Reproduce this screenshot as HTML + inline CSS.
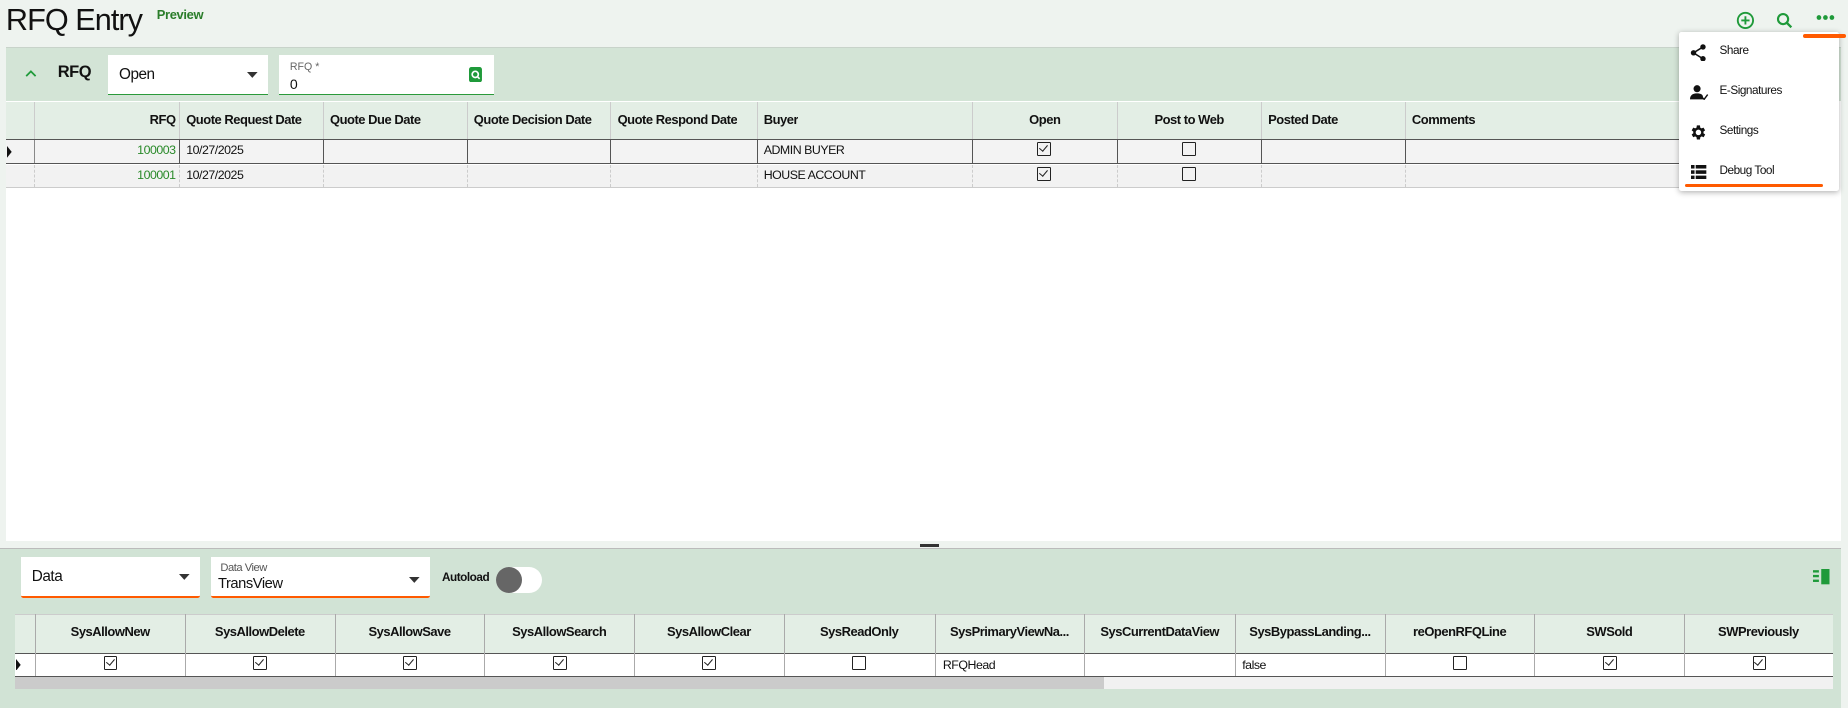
<!DOCTYPE html>
<html><head><meta charset="utf-8"><style>
html{zoom:1.17857}
body{margin:0;width:1568px;height:600px;background:#eef3ef;font-family:"Liberation Sans",sans-serif;position:relative;overflow:hidden;color:#111}
.a{position:absolute}
.f{font-family:"Liberation Sans",sans-serif;letter-spacing:-0.4px}
.h{font-size:11px;font-weight:bold;position:absolute;top:0;line-height:31px;white-space:nowrap;overflow:hidden}
.c{font-size:10.5px;position:absolute;white-space:nowrap}
.cb{position:absolute;width:10px;height:10px;border:1.6px solid #222;border-radius:1px}
.ck::after{content:"";position:absolute;left:2.5px;top:0px;width:3px;height:6px;border:solid #222;border-width:0 1.6px 1.6px 0;transform:rotate(40deg)}
.vl{position:absolute;top:0;bottom:0;border-left:1px solid #ccc}
.mi{position:absolute;left:34px;font-size:10px}
</style></head><body>
<div class="a" style="left:5px;top:2px;font-size:26px;line-height:32px;letter-spacing:-0.8px">RFQ Entry</div>
<div class="a" style="left:133px;top:6px;font-size:11px;font-weight:bold;color:#2a7d2a;letter-spacing:-0.3px">Preview</div>
<svg class="a" style="left:1473px;top:9px" width="16" height="16" viewBox="0 0 16 16"><circle cx="8" cy="8" r="6.5" fill="none" stroke="#1f9a3a" stroke-width="1.6"/><path d="M8 4.5v7M4.5 8h7" stroke="#1f9a3a" stroke-width="1.6"/></svg>
<svg class="a" style="left:1507px;top:10px" width="15" height="15" viewBox="0 0 15 15"><circle cx="6" cy="6" r="4.3" fill="none" stroke="#1f9a3a" stroke-width="1.8"/><path d="M9 9l4 4" stroke="#1f9a3a" stroke-width="2"/></svg>
<svg class="a" style="left:1541px;top:12px" width="16" height="6"><circle cx="2.5" cy="3" r="2" fill="#1f9a3a"/><circle cx="8" cy="3" r="2" fill="#1f9a3a"/><circle cx="13.5" cy="3" r="2" fill="#1f9a3a"/></svg>

<div class="a" style="left:5px;top:40px;width:1557px;height:418px;background:#fff;border-top:1px solid #c8d3ca">
 <div class="a" style="left:0;top:0;width:100%;height:45px;background:#d3e4d6"></div>
 <svg class="a" style="left:16px;top:18px" width="10" height="8"><path d="M1 6l4-4 4 4" fill="none" stroke="#1f9a3a" stroke-width="1.5"/></svg>
 <div class="a f" style="left:44px;top:13px;font-size:14px;font-weight:bold">RFQ</div>
 <div class="a" style="left:87px;top:6px;width:135px;height:33px;background:#fff;border-bottom:1.5px solid #2a9a3a"><span class="a f" style="left:9px;top:9px;font-size:13px">Open</span><svg class="a" style="left:118px;top:14px" width="9" height="5"><path d="M0 0h9L4.5 5z" fill="#333"/></svg></div>
 <div class="a" style="left:232px;top:6px;width:182px;height:33px;background:#fff;border-bottom:1.5px solid #2a9a3a"><span class="a" style="left:9px;top:5px;font-size:9px;color:#666">RFQ *</span><span class="a" style="left:9px;top:18px;font-size:12px">0</span><svg class="a" style="left:161px;top:10px" width="11" height="13"><rect x="0" y="0" width="11" height="13" rx="2" fill="#1f9a3a"/><circle cx="5.3" cy="6.3" r="2.6" fill="none" stroke="#fff" stroke-width="1.4"/><path d="M7 8l2 2" stroke="#fff" stroke-width="1.4"/></svg></div>
 <div class="a" style="left:0;top:46px;width:1425px;height:31px;background:#e3eee5;border-bottom:1px solid #bbb">
  <div class="vl" style="left:24px"></div><div class="vl" style="left:147px"></div><div class="vl" style="left:269px"></div><div class="vl" style="left:391px"></div><div class="vl" style="left:513px"></div><div class="vl" style="left:637px"></div><div class="vl" style="left:820px"></div><div class="vl" style="left:943px"></div><div class="vl" style="left:1065px"></div><div class="vl" style="left:1187px"></div>
  <div class="h f" style="left:24px;width:120px;text-align:right">RFQ</div>
  <div class="h f" style="left:153px">Quote Request Date</div><div class="h f" style="left:275px">Quote Due Date</div><div class="h f" style="left:397px">Quote Decision Date</div><div class="h f" style="left:519px">Quote Respond Date</div><div class="h f" style="left:643px">Buyer</div>
  <div class="h f" style="left:820px;width:123px;text-align:center">Open</div><div class="h f" style="left:943px;width:122px;text-align:center">Post to Web</div><div class="h f" style="left:1071px">Posted Date</div><div class="h f" style="left:1193px">Comments</div>
 </div>
 <div class="a" style="left:0;top:77px;width:1425px;height:20px;background:#f3f3f3;border-top:1.5px solid #555;border-bottom:1.5px solid #555">
  <svg class="a" style="left:1px;top:5px" width="5" height="10"><path d="M0 0l4 5-4 5z" fill="#111"/></svg>
  <div class="vl" style="left:24px;border-color:#888"></div><div class="vl" style="left:147px;border-color:#555"></div><div class="vl" style="left:269px;border-color:#555"></div><div class="vl" style="left:391px;border-color:#555"></div><div class="vl" style="left:513px;border-color:#555"></div><div class="vl" style="left:637px;border-color:#555"></div><div class="vl" style="left:820px;border-color:#555"></div><div class="vl" style="left:943px;border-color:#555"></div><div class="vl" style="left:1065px;border-color:#555"></div><div class="vl" style="left:1187px;border-color:#555"></div>
  <div class="c f" style="left:24px;width:120px;text-align:right;top:3px;color:#2a8a2a">100003</div><div class="c f" style="left:153px;top:3px">10/27/2025</div><div class="c f" style="left:643px;top:3px">ADMIN BUYER</div>
  <div class="cb ck" style="left:875px;top:2px"></div><div class="cb" style="left:998px;top:2px"></div>
 </div>
 <div class="a" style="left:0;top:99px;width:1425px;height:19px;background:#f2f2f2;border-bottom:1px solid #ccc">
  <div class="vl" style="left:24px;border-left:1px dashed #ccc"></div><div class="vl" style="left:147px;border-left:1px dashed #ccc"></div><div class="vl" style="left:269px;border-left:1px dashed #ccc"></div><div class="vl" style="left:391px;border-left:1px dashed #ccc"></div><div class="vl" style="left:513px;border-left:1px dashed #ccc"></div><div class="vl" style="left:637px;border-left:1px dashed #ccc"></div><div class="vl" style="left:820px;border-left:1px dashed #ccc"></div><div class="vl" style="left:943px;border-left:1px dashed #ccc"></div><div class="vl" style="left:1065px;border-left:1px dashed #ccc"></div><div class="vl" style="left:1187px;border-left:1px dashed #ccc"></div>
  <div class="c f" style="left:24px;width:120px;text-align:right;top:3px;color:#2a8a2a">100001</div><div class="c f" style="left:153px;top:3px">10/27/2025</div><div class="c f" style="left:643px;top:3px">HOUSE ACCOUNT</div>
  <div class="cb ck" style="left:875px;top:2px"></div><div class="cb" style="left:998px;top:2px"></div>
 </div>
</div>
<div class="a" style="left:781px;top:462px;width:16px;height:2px;background:#333"></div>

<div class="a" style="left:0;top:465px;width:1562px;height:135px;background:#d1e3d5;border-top:1px solid #bbb">
 <div class="a" style="left:18px;top:7px;width:152px;height:33px;background:#fff;border-bottom:2.5px solid #ff5a00;border-radius:0 0 2px 2px"><span class="a f" style="left:9px;top:9px;font-size:13px">Data</span><svg class="a" style="left:134px;top:14px" width="9" height="5"><path d="M0 0h9L4.5 5z" fill="#333"/></svg></div>
 <div class="a" style="left:179px;top:7px;width:186px;height:33px;background:#fff;border-bottom:2.5px solid #ff5a00;border-radius:0 0 2px 2px"><span class="a f" style="left:8px;top:4px;font-size:9.5px;color:#555">Data View</span><span class="a f" style="left:6px;top:16px;font-size:12.5px">TransView</span><svg class="a" style="left:168px;top:17px" width="9" height="5"><path d="M0 0h9L4.5 5z" fill="#333"/></svg></div>
 <div class="a f" style="left:375px;top:19px;font-size:10px;font-weight:bold">Autoload</div>
 <div class="a" style="left:421px;top:15px;width:39px;height:22px;background:#fff;border-radius:11px"></div>
 <div class="a" style="left:421px;top:15px;width:22px;height:22px;background:#666;border-radius:11px"></div>
 <svg class="a" style="left:1538px;top:17px" width="15" height="14"><rect x="0" y="1" width="5" height="2" fill="#1f9a3a"/><rect x="0" y="5" width="5" height="2" fill="#1f9a3a"/><rect x="0" y="9" width="5" height="2" fill="#1f9a3a"/><rect x="7" y="0" width="7" height="13" fill="#1f9a3a"/></svg>
 <div class="a" style="left:13px;top:55px;width:1542px;height:33px;background:#e3eee5;border-top:1px solid #ccc"></div>
 <div class="a" style="left:13px;top:88px;width:1542px;height:19px;background:#fff;border-top:1.5px solid #555;border-bottom:2px solid #555"></div>
 <div class="a" style="left:13px;top:109px;width:924px;height:10px;background:#cbcbcb"></div>
 <div class="a" style="left:937px;top:109px;width:618px;height:10px;background:#f1f1f1"></div>
 <svg class="a" style="left:14px;top:93px" width="5" height="10"><path d="M0 0l4 5-4 5z" fill="#111"/></svg>
</div>
<div class="a" style="left:13px;top:521px;width:1542px;height:53px">
 <div class="vl" style="left:17px;border-color:#aaa"></div><div class="vl" style="left:144px;border-color:#aaa"></div><div class="vl" style="left:271px;border-color:#aaa"></div><div class="vl" style="left:398px;border-color:#aaa"></div><div class="vl" style="left:525px;border-color:#aaa"></div><div class="vl" style="left:652px;border-color:#aaa"></div><div class="vl" style="left:780px;border-color:#aaa"></div><div class="vl" style="left:907px;border-color:#aaa"></div><div class="vl" style="left:1035px;border-color:#aaa"></div><div class="vl" style="left:1162px;border-color:#aaa"></div><div class="vl" style="left:1289px;border-color:#aaa"></div><div class="vl" style="left:1416px;border-color:#aaa"></div>
 <div class="h f" style="left:17px;width:127px;text-align:center">SysAllowNew</div><div class="h f" style="left:144px;width:127px;text-align:center">SysAllowDelete</div><div class="h f" style="left:271px;width:127px;text-align:center">SysAllowSave</div><div class="h f" style="left:398px;width:127px;text-align:center">SysAllowSearch</div><div class="h f" style="left:525px;width:127px;text-align:center">SysAllowClear</div><div class="h f" style="left:652px;width:128px;text-align:center">SysReadOnly</div><div class="h f" style="left:780px;width:127px;text-align:center">SysPrimaryViewNa...</div><div class="h f" style="left:907px;width:128px;text-align:center">SysCurrentDataView</div><div class="h f" style="left:1035px;width:127px;text-align:center">SysBypassLanding...</div><div class="h f" style="left:1162px;width:127px;text-align:center">reOpenRFQLine</div><div class="h f" style="left:1289px;width:127px;text-align:center">SWSold</div><div class="h f" style="left:1416px;width:126px;text-align:center">SWPreviously</div>
 <div class="cb ck" style="left:75px;top:36px"></div><div class="cb ck" style="left:202px;top:36px"></div><div class="cb ck" style="left:329px;top:36px"></div><div class="cb ck" style="left:456px;top:36px"></div><div class="cb ck" style="left:583px;top:36px"></div><div class="cb" style="left:710px;top:36px"></div>
 <div class="c f" style="left:787px;top:37px">RFQHead</div><div class="c f" style="left:1041px;top:37px">false</div>
 <div class="cb" style="left:1220px;top:36px"></div><div class="cb ck" style="left:1347px;top:36px"></div><div class="cb ck" style="left:1474px;top:36px"></div>
</div>

<div class="a" style="left:1425px;top:27px;width:135px;height:135px;background:#fff;box-shadow:0 1px 5px rgba(0,0,0,.3);border-radius:2px">
 <svg class="a" style="left:9px;top:10px" width="14" height="15"><circle cx="11" cy="2.5" r="2.3" fill="#111"/><circle cx="3" cy="7.5" r="2.3" fill="#111"/><circle cx="11" cy="12.5" r="2.3" fill="#111"/><path d="M11 2.5L3 7.5l8 5" stroke="#111" stroke-width="1.3" fill="none"/></svg>
 <div class="mi f" style="top:10px">Share</div>
 <svg class="a" style="left:9px;top:44px" width="16" height="14"><circle cx="6" cy="4" r="3" fill="#111"/><path d="M0 13c0-4 3-5 6-5s5 1 5 3v2z" fill="#111"/><path d="M10 11l2 2 3-4" stroke="#111" stroke-width="1.2" fill="none"/></svg>
 <div class="mi f" style="top:44px">E-Signatures</div>
 <svg class="a" style="left:8px;top:77px" width="16" height="16" viewBox="0 0 24 24"><path fill="#111" d="M19.4 13a7.5 7.5 0 000-2l2.1-1.6-2-3.5-2.5 1a7 7 0 00-1.7-1L15 3h-4l-.4 2.9a7 7 0 00-1.7 1l-2.5-1-2 3.5L6.5 11a7.5 7.5 0 000 2l-2.1 1.6 2 3.5 2.5-1a7 7 0 001.7 1L11 21h4l.4-2.9a7 7 0 001.7-1l2.5 1 2-3.5zM13 15.5a3.5 3.5 0 110-7 3.5 3.5 0 010 7z" transform="translate(-1 0)"/></svg>
 <div class="mi f" style="top:78px">Settings</div>
 <svg class="a" style="left:10px;top:113px" width="13" height="12"><rect x="0" y="0" width="3" height="3" fill="#111"/><rect x="4" y="0" width="9" height="3" fill="#111"/><rect x="0" y="4.5" width="3" height="3" fill="#111"/><rect x="4" y="4.5" width="9" height="3" fill="#111"/><rect x="0" y="9" width="3" height="3" fill="#111"/><rect x="4" y="9" width="9" height="3" fill="#111"/></svg>
 <div class="mi f" style="top:112px">Debug Tool</div>
 <div class="a" style="left:5px;top:129px;width:117px;height:3px;background:#ff5a00;border-radius:2px"></div>
</div>
<div class="a" style="left:1530px;top:29px;width:36px;height:3px;background:#ff5a00;border-radius:2px;z-index:5"></div>
</body></html>
